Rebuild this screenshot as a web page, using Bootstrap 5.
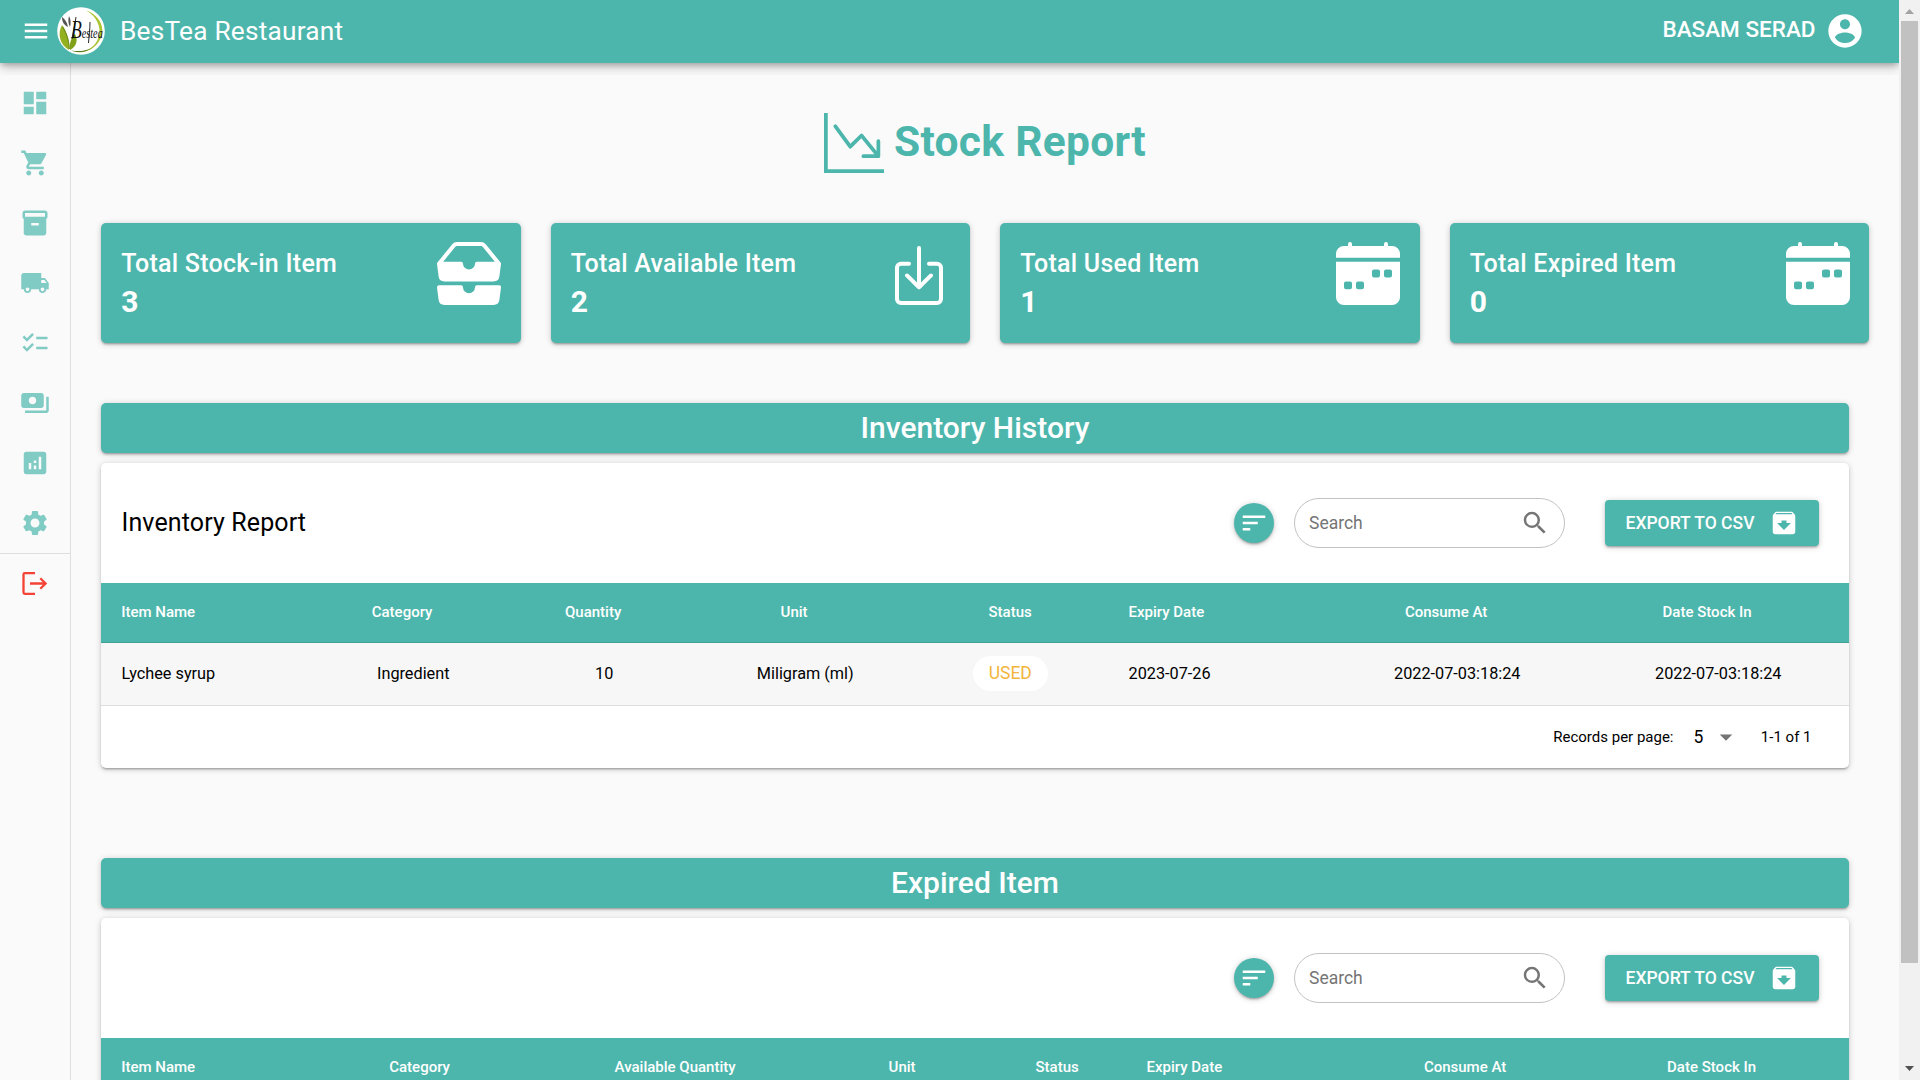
<!DOCTYPE html>
<html lang="en">
<head>
<meta charset="utf-8">
<meta name="viewport" content="width=device-width, initial-scale=1">
<title>BesTea Restaurant - Stock Report</title>
<link rel="stylesheet" href="https://cdn.jsdelivr.net/npm/bootstrap@5.3.0/dist/css/bootstrap.min.css">
<style>
:root{--teal:#4db6ac;--teal-light:#80cbc4}
html,body{height:1080px;overflow:hidden}
body{font-family:Roboto,sans-serif;background:#fafafa;color:#000;line-height:1.5}
svg{display:block;flex:none;fill:currentColor}
svg.line-icon{fill:none;stroke:currentColor;stroke-width:2.3}
.bg-teal{background:var(--teal);color:#fff}
.elev{box-shadow:0 1px 6px rgba(0,0,0,.2),0 2px 2px rgba(0,0,0,.14),0 3px 1px -2px rgba(0,0,0,.12);border-radius:5px}
.viewport{width:1899px;height:1080px}
.topbar{height:63px;padding:0 34px 1px 21px;box-shadow:0 3px 6px -1px rgba(0,0,0,.24),0 4px 12px rgba(0,0,0,.2);z-index:5;clip-path:inset(0 0 -12px 0)}
.logo{margin-left:6px}
.brand-name{font-size:26.25px;letter-spacing:.22px;margin-left:15px;padding-top:2px}
.user-name{font-size:22.5px;font-weight:500;margin-right:9.5px;padding-bottom:2px}
.rail{width:71px;border-right:1px solid #dedede;color:var(--teal-light);padding-top:10px}
.rail a{height:60px;color:inherit}
.rail .leave{color:#f44336;border-top:1px solid #dedede;height:61px}
.page-body{padding:50px 30px 0}
.page-title{height:60px;gap:10px;color:var(--teal);font-size:42.5px;font-weight:700;letter-spacing:.3px}
.page-title span{padding-bottom:3px}
.stats{gap:30px;margin-top:50px}
.stat{height:120px;padding:19px 19.5px 0 20.2px}
.stat-label{font-size:25px;font-weight:500;letter-spacing:.25px;line-height:40px;margin-top:2px}
.stat-num{font-size:30px;font-weight:700;line-height:36px}
.section-bar{height:50px;font-size:30px;font-weight:500;line-height:50px;margin-top:60px}
.section-bar.later{margin-top:90px}
.wide{width:1748px}
.panel{background:#fff;margin-top:10px;overflow:hidden}
.panel-wrap{height:305px}
.tools{height:120px;padding:0 30px 0 20.5px}
.tools-title{font-size:25px;letter-spacing:.12px}
.sort-btn{width:40px;height:40px;margin-right:20px;padding:0}
.find{width:271px;height:50px;border:1px solid #c2c2c2;border-radius:25px;padding:0 14px;margin-right:40px;color:#757575;font-size:17.5px}
.export{width:214px;height:46px;border-radius:4px;font-size:17.5px;font-weight:500;padding:0 20px 0 20.5px;white-space:nowrap}
.btn-lift{box-shadow:0 1px 6px rgba(0,0,0,.2),0 2px 2px rgba(0,0,0,.14),0 3px 1px -2px rgba(0,0,0,.12)}
.grid{table-layout:fixed;width:1748px;border-collapse:separate;border-spacing:0;margin:0}
.grid th{height:60px;background:var(--teal);color:#fff;font-size:15px;font-weight:500;border-bottom:1px solid #43a097;padding:0 20px 0 20.200px;text-align:center;white-space:nowrap}
.grid th.sortable{padding-right:42px}
.grid td{height:63px;background:#f7f7f7;font-size:16.25px;border-bottom:1px solid #dedede;padding:0 20px 0 20.5px;text-align:center}
.grid .start{text-align:left}
.grid .start~.start{padding-left:21.5px}
.pill{display:inline-flex;width:75px;height:35px;border-radius:18px;background:#fff;color:#f2b53c;font-size:17.5px;align-items:center;justify-content:center;vertical-align:middle;margin-top:-2px;padding-top:1px}
.pager{height:62px;font-size:15px;padding-right:37.5px}
.page-size{font-size:17.5px;margin-left:20px}
.caret{margin:0 19.5px 0 8px;color:#757575}
.scroller{width:21px;background:#f1f1f1}
.thumb{width:17px;height:942px;background:#c1c1c1}
.arrow-up{color:#a3a3a3}
.arrow-down{color:#505050}
</style>
</head>
<body>
<div class="d-flex">
<div class="viewport d-flex flex-column overflow-hidden">
  <header class="topbar bg-teal d-flex align-items-center position-relative flex-shrink-0">
    <svg width="30" height="30" viewBox="0 0 24 24"><path d="M3 18h18v-2H3v2zm0-5h18v-2H3v2zm0-7v2h18V6H3z"/></svg>
    <svg class="logo" width="48" height="48" viewBox="0 0 48 48">
      <circle cx="24" cy="24" r="23.8" fill="#fff"/>
      <path d="M29 3.500C44 8 51 25 40 37c-6 7-14 9-21 8 9 0 15-3 19-8 9-11 4-27-9-33.500z" fill="#a9c52f"/>
      <path d="M14 43.500c10 4 21 0 27-8-5 7-15 10-27 8z" fill="#57791c"/>
      <path d="M5 18C0 27 3 38 12 43c1-9-2-18-7-25z" fill="#93b01f"/>
      <path d="M13 43c7-4 8-10 5-16-4 4-6 10-5 16z" fill="#7fa018"/>
      <path d="M5 10c0 5 2 8 6 10-1-5-3-8-6-10zM13 20c-2-4-2-7-1-11 2 4 2 7 1 11z" fill="#555"/>
      <path d="M6 20c4 8 6 14 6.500 22" fill="none" stroke="#5c7a10" stroke-width=".8"/>
      <text transform="translate(14 31) scale(.68 1)" fill="#111" font-family="'Liberation Serif',serif" font-style="italic" font-size="15"><tspan font-size="26">B</tspan>estea</text>
      <path d="M19 10c-1 8-3 15-4 22M33 15c0 7-1 14-1.500 21" fill="none" stroke="#111" stroke-width=".9"/>
    </svg>
    <span class="brand-name">BesTea Restaurant</span>
    <span class="user-name ms-auto">BASAM SERAD</span>
    <svg width="40" height="40" viewBox="0 0 24 24"><path d="M12 2C6.480 2 2 6.480 2 12s4.480 10 10 10 10-4.480 10-10S17.520 2 12 2zm0 3c1.660 0 3 1.340 3 3s-1.340 3-3 3-3-1.340-3-3 1.340-3 3-3zm0 14.200c-2.500 0-4.710-1.280-6-3.220.03-1.990 4-3.080 6-3.080 1.990 0 5.970 1.090 6 3.080-1.290 1.940-3.500 3.220-6 3.220z"/></svg>
  </header>
  <div class="d-flex flex-grow-1">
    <nav class="rail d-flex flex-column flex-shrink-0">
      <a class="d-flex align-items-center justify-content-center"><svg width="30" height="30" viewBox="0 0 24 24"><path d="M3 13h8V3H3v10zm0 8h8v-6H3v6zm10 0h8V11h-8v10zm0-18v6h8V3h-8z"/></svg></a>
      <a class="d-flex align-items-center justify-content-center"><svg width="30" height="30" viewBox="0 0 24 24"><path d="M7 18c-1.100 0-1.990.9-1.990 2S5.900 22 7 22s2-.9 2-2-.9-2-2-2zM1 2v2h2l3.600 7.590-1.350 2.450c-.16.28-.25.61-.25.96 0 1.100.9 2 2 2h12v-2H7.420c-.14 0-.25-.11-.25-.25l.03-.12.9-1.630h7.450c.75 0 1.410-.41 1.750-1.030l3.580-6.490A1.003 1.003 0 0 0 20 4H5.210l-.94-2H1zm16 16c-1.100 0-1.990.9-1.990 2s.89 2 1.990 2 2-.9 2-2-.9-2-2-2z"/></svg></a>
      <a class="d-flex align-items-center justify-content-center"><svg width="30" height="30" viewBox="0 0 24 24"><path d="M20 2H4c-1 0-2 .9-2 2v3.010c0 .72.43 1.340 1 1.690V20c0 1.100 1.100 2 2 2h14c.9 0 2-.9 2-2V8.700c.57-.35 1-.97 1-1.690V4c0-1.100-1-2-2-2zm-5 12H9v-2h6v2zm5-7H4V4h16v3z"/></svg></a>
      <a class="d-flex align-items-center justify-content-center"><svg width="30" height="30" viewBox="0 0 24 24"><path d="M20 8h-3V4H3c-1.100 0-2 .9-2 2v11h2c0 1.660 1.340 3 3 3s3-1.340 3-3h6c0 1.660 1.340 3 3 3s3-1.340 3-3h2v-5l-3-4zM6 18.500c-.83 0-1.500-.67-1.500-1.500s.67-1.500 1.500-1.500 1.500.67 1.500 1.500-.67 1.500-1.500 1.500zm13.500-9l1.960 2.500H17V9.500h2.500zm-1.500 9c-.83 0-1.500-.67-1.500-1.500s.67-1.500 1.500-1.500 1.500.67 1.500 1.500-.67 1.500-1.500 1.500z"/></svg></a>
      <a class="d-flex align-items-center justify-content-center"><svg width="30" height="30" viewBox="0 0 24 24"><path d="M22 7h-9v2h9V7zm0 8h-9v2h9v-2zM5.540 11L2 7.460l1.410-1.410 2.120 2.120 4.240-4.240 1.410 1.410L5.540 11zm0 8L2 15.460l1.410-1.410 2.120 2.120 4.240-4.240 1.410 1.410L5.540 19z"/></svg></a>
      <a class="d-flex align-items-center justify-content-center"><svg width="30" height="30" viewBox="0 0 24 24"><path d="M19 14V6c0-1.100-.9-2-2-2H3c-1.100 0-2 .9-2 2v8c0 1.100.9 2 2 2h14c1.100 0 2-.9 2-2zm-9-1c-1.660 0-3-1.340-3-3s1.340-3 3-3 3 1.340 3 3-1.340 3-3 3zm13-6v11c0 1.100-.9 2-2 2H4v-2h17V7h2z"/></svg></a>
      <a class="d-flex align-items-center justify-content-center"><svg width="30" height="30" viewBox="0 0 24 24"><path d="M19 3H5c-1.100 0-2 .9-2 2v14c0 1.100.9 2 2 2h14c1.100 0 2-.9 2-2V5c0-1.100-.9-2-2-2zM9 17H7v-5h2v5zm4 0h-2v-3h2v3zm0-5h-2v-2h2v2zm4 5h-2V7h2v10z"/></svg></a>
      <a class="d-flex align-items-center justify-content-center"><svg width="30" height="30" viewBox="0 0 24 24"><path d="M19.140 12.940c.04-.3.06-.61.06-.94 0-.32-.02-.64-.07-.94l2.030-1.580c.18-.14.23-.41.12-.61l-1.920-3.320c-.12-.22-.37-.29-.59-.22l-2.390.96c-.5-.38-1.030-.7-1.620-.94l-.36-2.540c-.04-.24-.24-.41-.48-.41h-3.840c-.24 0-.43.17-.47.41l-.36 2.540c-.59.24-1.130.57-1.620.94l-2.390-.96c-.22-.08-.47 0-.59.22L2.740 8.870c-.12.21-.08.47.12.61l2.030 1.580c-.05.3-.09.63-.09.94s.02.64.07.94l-2.030 1.580c-.18.14-.23.41-.12.61l1.920 3.320c.12.22.37.29.59.22l2.390-.96c.5.38 1.030.7 1.620.94l.36 2.540c.05.24.24.41.48.41h3.840c.24 0 .44-.17.47-.41l.36-2.540c.59-.24 1.130-.56 1.620-.94l2.390.96c.22.08.47 0 .59-.22l1.920-3.320c.12-.22.07-.47-.12-.61l-2.010-1.580zM12 15.600c-1.980 0-3.600-1.620-3.600-3.600s1.620-3.600 3.600-3.600 3.600 1.620 3.600 3.600-1.620 3.600-3.600 3.600z"/></svg></a>
      <a class="leave d-flex align-items-center justify-content-center"><svg class="line-icon" width="30" height="30" viewBox="0 0 30 30"><path d="M15 4.200H4.800a1.300 1.300 0 0 0-1.300 1.300v18a1.300 1.300 0 0 0 1.300 1.300H15M10 14.500h16M20.300 9.200l5.300 5.300-5.300 5.300"/></svg></a>
    </nav>
    <main class="page-body flex-grow-1">
      <h1 class="page-title d-flex align-items-center justify-content-center m-0">
        <svg width="60" height="60" viewBox="0 0 16 16"><path d="M0 0h1v15h15v1H0V0Zm10 11.500a.5.5 0 0 0 .5.5h4a.5.5 0 0 0 .5-.5v-4a.5.5 0 0 0-1 0v2.600l-3.613-4.417a.5.5 0 0 0-.74-.037L7.060 8.233 3.404 3.206a.5.5 0 0 0-.808.588l4 5.500a.5.5 0 0 0 .758.06l2.609-2.610L13.445 11H10.500a.5.5 0 0 0-.5.5Z"/></svg>
        <span>Stock Report</span>
      </h1>
      <section class="stats d-flex">
        <div class="stat elev bg-teal d-flex justify-content-between flex-fill w-100"><div><div class="stat-label">Total Stock-in Item</div><div class="stat-num">3</div></div>
          <svg width="64" height="63" preserveAspectRatio="none" viewBox="0 0 16 16"><path d="M4.980 1a.5.5 0 0 0-.39.188L1.540 5H6a.5.5 0 0 1 .5.5 1.500 1.500 0 0 0 3 0A.5.5 0 0 1 10 5h4.460l-3.050-3.812A.5.5 0 0 0 11.020 1H4.980zM3.810.563A1.500 1.500 0 0 1 4.980 0h6.040a1.500 1.500 0 0 1 1.170.563l3.700 4.625a.5.5 0 0 1 .106.374l-.39 3.124A1.500 1.500 0 0 1 14.117 10H1.883A1.500 1.500 0 0 1 .394 8.686l-.39-3.124a.5.5 0 0 1 .106-.374L3.810.563zM.125 11.170A.5.5 0 0 1 .5 11H6a.5.5 0 0 1 .5.5 1.500 1.500 0 0 0 3 0 .5.5 0 0 1 .5-.5h5.500a.5.5 0 0 1 .496.562l-.39 3.124A1.500 1.500 0 0 1 14.117 16H1.883a1.500 1.500 0 0 1-1.489-1.314l-.39-3.124a.5.5 0 0 1 .121-.393z"/></svg></div>
        <div class="stat elev bg-teal d-flex justify-content-between flex-fill w-100"><div><div class="stat-label">Total Available Item</div><div class="stat-num">2</div></div>
          <svg width="64" height="63" preserveAspectRatio="none" viewBox="0 0 16 16"><path d="M3.500 6a.5.5 0 0 0-.5.5v8a.5.5 0 0 0 .5.5h9a.5.5 0 0 0 .5-.5v-8a.5.5 0 0 0-.5-.5h-2a.5.5 0 0 1 0-1h2A1.500 1.500 0 0 1 14 6.500v8a1.500 1.500 0 0 1-1.500 1.500h-9A1.500 1.500 0 0 1 2 14.500v-8A1.500 1.500 0 0 1 3.500 5h2a.5.5 0 0 1 0 1h-2z"/><path d="M7.646 11.854a.5.5 0 0 0 .708 0l3-3a.5.5 0 0 0-.708-.708L8.500 10.293V1.500a.5.5 0 0 0-1 0v8.793L5.354 8.146a.5.5 0 1 0-.708.708l3 3z"/></svg></div>
        <div class="stat elev bg-teal d-flex justify-content-between flex-fill w-100"><div><div class="stat-label">Total Used Item</div><div class="stat-num">1</div></div>
          <svg width="64" height="63" preserveAspectRatio="none" viewBox="0 0 16 16"><path id="week" d="M4 .5a.5.5 0 0 0-1 0V1H2a2 2 0 0 0-2 2v1h16V3a2 2 0 0 0-2-2h-1V.5a.5.5 0 0 0-1 0V1H4V.5zM16 14V5H0v9a2 2 0 0 0 2 2h12a2 2 0 0 0 2-2zM9.500 7h1a.5.5 0 0 1 .5.5v1a.5.5 0 0 1-.5.5h-1a.5.5 0 0 1-.5-.5v-1a.5.5 0 0 1 .5-.5zm3 0h1a.5.5 0 0 1 .5.5v1a.5.5 0 0 1-.5.5h-1a.5.5 0 0 1-.5-.5v-1a.5.5 0 0 1 .5-.5zM2 10.500a.5.5 0 0 1 .5-.5h1a.5.5 0 0 1 .5.5v1a.5.5 0 0 1-.5.5h-1a.5.5 0 0 1-.5-.5v-1zm3.500-.5h1a.5.5 0 0 1 .5.5v1a.5.5 0 0 1-.5.5h-1a.5.5 0 0 1-.5-.5v-1a.5.5 0 0 1 .5-.5z"/></svg></div>
        <div class="stat elev bg-teal d-flex justify-content-between flex-fill w-100"><div><div class="stat-label">Total Expired Item</div><div class="stat-num">0</div></div>
          <svg width="64" height="63" preserveAspectRatio="none" viewBox="0 0 16 16"><use href="#week"/></svg></div>
      </section>

      <div class="section-bar wide elev bg-teal text-center">Inventory History</div>
      <section class="panel panel-wrap wide elev">
        <div class="tools d-flex align-items-center">
          <span class="tools-title me-auto">Inventory Report</span>
          <button class="sort-btn btn-lift btn bg-teal rounded-circle border-0 d-flex align-items-center justify-content-center"><svg width="30" height="30" viewBox="0 0 24 24"><path d="M3 18h6v-2H3v2zM3 6v2h18V6H3zm0 7h12v-2H3v2z"/></svg></button>
          <div class="find d-flex align-items-center justify-content-between"><span>Search</span><svg width="30" height="30" viewBox="0 0 24 24"><path id="lens" d="M15.500 14h-.79l-.28-.27A6.471 6.471 0 0 0 16 9.500 6.500 6.500 0 1 0 9.500 16c1.610 0 3.090-.59 4.230-1.570l.27.28v.79l5 4.990L20.490 19l-4.990-5zm-6 0C7.010 14 5 11.990 5 9.500S7.010 5 9.500 5 14 7.010 14 9.500 11.990 14 9.500 14z"/></svg></div>
          <button class="export btn btn-lift bg-teal border-0 d-flex align-items-center justify-content-between"><span>EXPORT TO CSV</span><svg width="30" height="30" viewBox="0 0 24 24"><path id="arch" d="M20.540 5.230l-1.390-1.680C18.880 3.210 18.470 3 18 3H6c-.47 0-.88.21-1.160.55L3.460 5.230C3.170 5.570 3 6.020 3 6.500V19c0 1.100.9 2 2 2h14c1.100 0 2-.9 2-2V6.500c0-.48-.17-.93-.46-1.270zM12 17.500L6.500 12H10v-2h4v2h3.500L12 17.500zM5.120 5l.81-1h12l.94 1H5.120z"/></svg></button>
        </div>
        <table class="grid">
          <colgroup><col width="214"><col width="196"><col width="186"><col width="216"><col width="194"><col width="220"><col width="260"><col width="262"></colgroup>
          <thead><tr><th class="start">Item Name</th><th class="sortable">Category</th><th class="sortable">Quantity</th><th class="sortable">Unit</th><th>Status</th><th class="start">Expiry Date</th><th class="sortable">Consume At</th><th class="sortable">Date Stock In</th></tr></thead>
          <tbody><tr><td class="start">Lychee syrup</td><td>Ingredient</td><td>10</td><td>Miligram (ml)</td><td><span class="pill">USED</span></td><td class="start">2023-07-26</td><td>2022-07-03:18:24</td><td>2022-07-03:18:24</td></tr></tbody>
        </table>
        <div class="pager d-flex align-items-center justify-content-end">
          <span>Records per page:</span>
          <span class="page-size">5</span>
          <svg class="caret" width="30" height="30" viewBox="0 0 24 24"><path d="M7 10l5 5 5-5z"/></svg>
          <span>1-1 of 1</span>
        </div>
      </section>

      <div class="section-bar later wide elev bg-teal text-center">Expired Item</div>
      <section class="panel wide elev">
        <div class="tools d-flex align-items-center">
          <button class="sort-btn ms-auto btn-lift btn bg-teal rounded-circle border-0 d-flex align-items-center justify-content-center"><svg width="30" height="30" viewBox="0 0 24 24"><path d="M3 18h6v-2H3v2zM3 6v2h18V6H3zm0 7h12v-2H3v2z"/></svg></button>
          <div class="find d-flex align-items-center justify-content-between"><span>Search</span><svg width="30" height="30" viewBox="0 0 24 24"><use href="#lens"/></svg></div>
          <button class="export btn btn-lift bg-teal border-0 d-flex align-items-center justify-content-between"><span>EXPORT TO CSV</span><svg width="30" height="30" viewBox="0 0 24 24"><use href="#arch"/></svg></button>
        </div>
        <table class="grid">
          <colgroup><col width="225"><col width="209"><col width="302"><col width="152"><col width="136"><col width="231"><col width="240"><col width="253"></colgroup>
          <thead><tr><th class="start">Item Name</th><th class="sortable">Category</th><th class="sortable">Available Quantity</th><th class="sortable">Unit</th><th>Status</th><th class="start">Expiry Date</th><th class="sortable">Consume At</th><th class="sortable">Date Stock In</th></tr></thead>
        </table>
      </section>
    </main>
  </div>
</div>
<div class="scroller d-flex flex-column align-items-center">
  <svg class="arrow-up" width="21" height="21" viewBox="0 0 21 21"><path d="M6 14h9l-4.500-5z"/></svg>
  <div class="thumb"></div>
  <svg class="arrow-down mt-auto" width="21" height="21" viewBox="0 0 21 21"><path d="M6 7h9l-4.500 5z"/></svg>
</div>
</div>
<script src="https://cdn.jsdelivr.net/npm/bootstrap@5.3.0/dist/js/bootstrap.bundle.min.js"></script>
</body>
</html>
